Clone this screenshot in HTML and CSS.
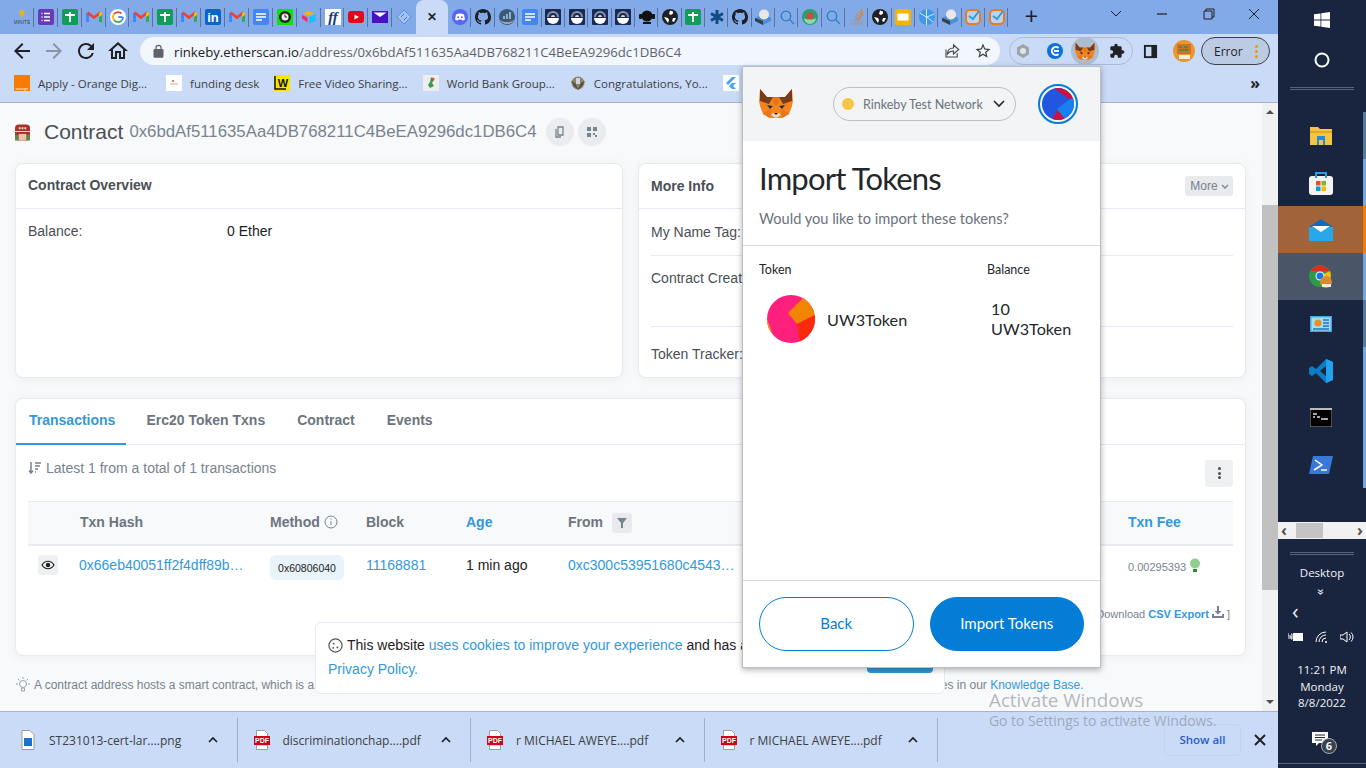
FILE: index.html
```html
<!DOCTYPE html>
<html lang="en">
<head>
  <meta charset="UTF-8">
  <title>Contract 0x6bdAf511635Aa4DB768211C4BeEA9296dc1DB6C4</title>
  <link rel="stylesheet" href="styles.css">
</head>
<body>

<svg class="defs" width="0" height="0">
  <symbol id="i-tasks" viewBox="0 0 16 16"><rect width="16" height="16" rx="2" fill="#673ab7"/><path d="M6 4.5h6M6 8h6M6 11.5h6M3.5 4.5h1M3.5 8h1M3.5 11.5h1" stroke="#fff" stroke-width="1.5"/></symbol>
  <symbol id="i-sheet" viewBox="0 0 16 16"><rect width="16" height="16" rx="2" fill="#0f9d58"/><path d="M3 6h10M8 3v10" stroke="#fff" stroke-width="1.8"/></symbol>
  <symbol id="i-gmail" viewBox="0 0 16 16"><path d="M1.5 13V4" stroke="#4285f4" stroke-width="3"/><path d="M14.5 13V4" stroke="#34a853" stroke-width="3"/><path d="M1.5 3.5L8 8.5l6.5-5" fill="none" stroke="#ea4335" stroke-width="2.6"/><path d="M13 4l2-1 1 1v2l-3 2z" fill="#fbbc04"/></symbol>
  <symbol id="i-google" viewBox="0 0 16 16"><circle cx="8" cy="8" r="8" fill="#fff"/><path d="M12.5 8H8.3" stroke="#4285f4" stroke-width="1.8"/><path d="M12 11.2A5 5 0 0 1 4 11" fill="none" stroke="#34a853" stroke-width="1.8"/><path d="M4 11a5 5 0 0 1 0-6" fill="none" stroke="#fbbc04" stroke-width="1.8"/><path d="M4 5a5 5 0 0 1 7.5-.5" fill="none" stroke="#ea4335" stroke-width="1.8"/><path d="M13 8a5 5 0 0 1-1 3.2" fill="none" stroke="#4285f4" stroke-width="1.8"/></symbol>
  <symbol id="i-docs" viewBox="0 0 16 16"><rect width="16" height="16" rx="2" fill="#4285f4"/><path d="M3 5h10M3 8h10M3 11h6" stroke="#fff" stroke-width="1.5"/></symbol>
  <symbol id="i-watch" viewBox="0 0 16 16"><rect width="16" height="16" fill="#0be30b"/><circle cx="8" cy="8" r="6" fill="#222"/><circle cx="8" cy="8" r="3.5" fill="#eee"/><path d="M8 5.5V8h2" stroke="#222" fill="none"/></symbol>
  <symbol id="i-air" viewBox="0 0 16 16"><path d="M7 2l6 2.2L7.5 6.5 2 4.2z" fill="#fcb400"/><path d="M8.5 8l6-2.400v6.400l-6 2.400z" fill="#18bfff"/><path d="M1 6l5.5 2.5v4.800L1 9.500z" fill="#f82b60"/></symbol>
  <symbol id="i-yt" viewBox="0 0 16 16"><rect y="2" width="16" height="12" rx="3" fill="#e50914"/><path d="M6.5 5.5v5L11 8z" fill="#fff"/></symbol>
  <symbol id="i-pmail" viewBox="0 0 16 16"><rect y="2" width="16" height="12" fill="#4a0fc4"/><path d="M1.5 3.5h13L8 8z" fill="#fff"/></symbol>
  <symbol id="i-diamond" viewBox="0 0 16 16"><path d="M8 1l7 7-7 7-7-7z" fill="#a3c2f0" stroke="#5c8fe0"/><path d="M5 8l3-3M8 11l3-3" stroke="#3f7be0"/></symbol>
  <symbol id="i-discord" viewBox="0 0 16 16"><circle cx="8" cy="8" r="8" fill="#5865f2"/><path d="M4 5.500c2.500-1.200 5.500-1.200 8 0l1 5c-1 .8-2 1-2.800 1L9.500 10.500h-3l-.7 1c-.8 0-1.800-.2-2.800-1z" fill="#fff"/><circle cx="6.2" cy="8.3" r="1" fill="#5865f2"/><circle cx="9.8" cy="8.3" r="1" fill="#5865f2"/></symbol>
  <symbol id="i-github" viewBox="0 0 16 16"><path fill="#1b1f23" d="M8 0C3.580 0 0 3.580 0 8c0 3.540 2.290 6.530 5.470 7.590.4.070.55-.17.55-.38 0-.19-.01-.82-.01-1.490-2.010.37-2.530-.49-2.690-.94-.09-.23-.48-.94-.82-1.130-.28-.15-.68-.52-.01-.53.63-.01 1.080.58 1.230.82.720 1.210 1.870.87 2.330.66.070-.52.280-.87.510-1.070-1.780-.2-3.640-.89-3.640-3.950 0-.87.310-1.590.82-2.150-.08-.2-.36-1.020.08-2.120 0 0 .67-.21 2.200.82.640-.18 1.320-.27 2-.27.680 0 1.360.09 2 .27 1.530-1.040 2.200-.82 2.200-.82.440 1.100.160 1.920.080 2.120.510.560.820 1.270.820 2.150 0 3.070-1.870 3.750-3.650 3.950.290.250.540.730.540 1.480 0 1.070-.01 1.930-.01 2.200 0 .21.150.46.550.38A8.013 8.013 0 0016 8c0-4.420-3.580-8-8-8z"/></symbol>
  <symbol id="i-chart" viewBox="0 0 16 16"><circle cx="8" cy="8" r="8" fill="#3a5878"/><path d="M1 11a8 8 0 0 0 14 0c-4 3-10 3-14 0z" fill="#aaa"/><path d="M4 10V7h2v3zM7 10V5h2v5zM10 10V3h2v7z" fill="#8fb0d0"/></symbol>
  <symbol id="i-arch" viewBox="0 0 16 16"><rect width="16" height="16" rx="1" fill="#1a2a55"/><path d="M2 8a6 6 0 0 1 12 0z" fill="#8a94ac"/><path d="M4 8a4 4 0 0 1 8 0z" fill="#1a2a55"/><path d="M6 8a2 2 0 0 1 4 0z" fill="#ddd"/><path d="M2 9h12a6 6 0 0 1-12 0z" fill="#fff"/></symbol>
  <symbol id="i-headset" viewBox="0 0 16 16"><circle cx="8" cy="7" r="5.5" fill="#111"/><rect x="0" y="5" width="3" height="5" rx="1" fill="#111"/><rect x="13" y="5" width="3" height="5" rx="1" fill="#111"/><path d="M4 14h8" stroke="#111" stroke-width="2"/></symbol>
  <symbol id="i-globe" viewBox="0 0 16 16"><circle cx="8" cy="8" r="8" fill="#202124"/><path d="M8 1.5l3 1v2L9 6 7 5zM2 8l4 1 1 2-1 3zM11 9h3l-2 4-2-1z" fill="#fff"/></symbol>
  <symbol id="i-star" viewBox="0 0 16 16"><path d="M8 1v14M2 4.5l12 7M14 4.5l-12 7" stroke="#0f4c81" stroke-width="3"/></symbol>
  <symbol id="i-ball" viewBox="0 0 16 16"><path d="M0 9l8-4 8 4v3l-8 4-8-4z" fill="#4a90d9"/><path d="M0 9l8 3v4l-8-4z" fill="#3a3f47"/><circle cx="9" cy="5.5" r="5" fill="#e8e8e8"/></symbol>
  <symbol id="i-search" viewBox="0 0 16 16"><circle cx="7" cy="7" r="4.8" fill="none" stroke="#2a7fc0" stroke-width="1.3"/><path d="M10.5 10.5L15 15" stroke="#2a7fc0" stroke-width="1.3"/></symbol>
  <symbol id="i-green" viewBox="0 0 16 16"><circle cx="8" cy="8" r="8" fill="#28a070"/><circle cx="8" cy="7" r="3.5" fill="#d04a40"/><path d="M2 9a6 6 0 0 0 12 0c-3 2-9 2-12 0z" fill="#8fd6a8"/></symbol>
  <symbol id="i-stack" viewBox="0 0 16 16"><path d="M3 10v5h10v-5M5 12.5h6" fill="none" stroke="#a89c90" stroke-width="1.3"/><path d="M5 10.5l6 .5M5.5 8l6 1.5M7 5l5.5 3M9.5 2l4 5M12 0l2 6" stroke="#e87a2a" stroke-width="1.2"/></symbol>
  <symbol id="i-yellow" viewBox="0 0 16 16"><rect width="16" height="16" rx="2" fill="#f4b400"/><rect x="2.5" y="4.5" width="11" height="7" fill="#fff"/></symbol>
  <symbol id="i-wheel" viewBox="0 0 16 16"><circle cx="8" cy="8" r="8" fill="#3e9ae8"/><path d="M7.5 0v16M1 4l6 4M15 5L8 8 14 13" stroke="#d6e6f8" fill="none"/></symbol>
  <symbol id="i-check" viewBox="0 0 16 16"><rect x="1" y="1" width="14" height="14" rx="4" fill="#b9d3f0" stroke="#ef7a1a" stroke-width="2"/><path d="M4 7l4 3 6-8" fill="none" stroke="#2a9ad8" stroke-width="1.8"/></symbol>
  <symbol id="i-fox" viewBox="0 0 34 32">
    <path d="M8 9h18l7-8 1 12-1 5-3 8-7 4H11l-7-4-3-8-1-5 1-12z" fill="#f5841f"/>
    <path d="M14 9h6l-1 8h-4z" fill="#e2761b"/><path d="M1 1l7 8 6 0-4 7-9-3zM33 1l-7 8-6 0 4 7 9-3z" fill="#763d16"/>
    <path d="M8 17l6 1-3 3zM26 17l-6 1 3 3z" fill="#233447"/>
    <path d="M12 27l5 3 5-3-2-2h-6z" fill="#e8ddd2"/><path d="M15 25h4l-2 2z" fill="#161616"/>
    <path d="M4 26l7-5 1 6-1 3zM30 26l-7-5-1 6 1 3z" fill="#e4761b"/>
  </symbol>
  <symbol id="i-back" viewBox="0 0 24 24"><path d="M20 11H7.830l5.590-5.590L12 4l-8 8 8 8 1.410-1.410L7.830 13H20v-2z"/></symbol>
  <symbol id="i-chevup" viewBox="0 0 12 12"><path d="M2 8l4-4 4 4" fill="none" stroke="#202124" stroke-width="1.7"/></symbol>
  <symbol id="i-pdf" viewBox="0 0 16 20"><path d="M2.5.5h8l3 3V7h-11z" fill="#fff" stroke="#888" stroke-width=".8"/><path d="M2.5 15h11v4.500h-11z" fill="#fff" stroke="#888" stroke-width=".8"/><rect x="0" y="6" width="16" height="9" fill="#d0021b"/></symbol>
</svg>

<div class="screen">
  <div class="browser">

    <div class="tabstrip">
      <div class="tab"><svg class="fav" viewBox="0 0 16 16"><path d="M8 0l3 3-2 5H7L5 3z" fill="#e0b030"/><text x="8" y="15" text-anchor="middle" font-size="5" font-family="Liberation Sans" fill="#444">MINITE</text></svg></div>
      <div class="tab"><svg class="fav"><use href="#i-tasks"/></svg></div>
      <div class="tab"><svg class="fav"><use href="#i-sheet"/></svg></div>
      <div class="tab"><svg class="fav"><use href="#i-gmail"/></svg></div>
      <div class="tab"><svg class="fav"><use href="#i-google"/></svg></div>
      <div class="tab"><svg class="fav"><use href="#i-gmail"/></svg></div>
      <div class="tab"><svg class="fav"><use href="#i-sheet"/></svg></div>
      <div class="tab"><svg class="fav"><use href="#i-gmail"/></svg></div>
      <div class="tab"><svg class="fav" viewBox="0 0 16 16"><rect width="16" height="16" rx="2" fill="#0a66c2"/><text x="8" y="13" text-anchor="middle" font-size="13" font-weight="700" font-family="Liberation Sans" fill="#fff">in</text></svg></div>
      <div class="tab"><svg class="fav"><use href="#i-gmail"/></svg></div>
      <div class="tab"><svg class="fav"><use href="#i-docs"/></svg></div>
      <div class="tab"><svg class="fav"><use href="#i-watch"/></svg></div>
      <div class="tab"><svg class="fav"><use href="#i-air"/></svg></div>
      <div class="tab"><svg class="fav" viewBox="0 0 16 16"><rect width="16" height="16" fill="#fff"/><text x="8" y="13" text-anchor="middle" font-size="15" font-style="italic" font-weight="700" font-family="Liberation Serif" fill="#123c78">ff</text></svg></div>
      <div class="tab"><svg class="fav"><use href="#i-yt"/></svg></div>
      <div class="tab"><svg class="fav"><use href="#i-pmail"/></svg></div>
      <div class="tab tab-last"><svg class="fav"><use href="#i-diamond"/></svg></div>
      <div class="tab-active">✕</div>
      <div class="tab tab-narrow"><svg class="fav"><use href="#i-discord"/></svg></div>
      <div class="tab tab-narrow"><svg class="fav"><use href="#i-github"/></svg></div>
      <div class="tab tab-narrow"><svg class="fav"><use href="#i-chart"/></svg></div>
      <div class="tab tab-narrow"><svg class="fav"><use href="#i-docs"/></svg></div>
      <div class="tab tab-narrow"><svg class="fav"><use href="#i-arch"/></svg></div>
      <div class="tab tab-narrow"><svg class="fav"><use href="#i-arch"/></svg></div>
      <div class="tab tab-narrow"><svg class="fav"><use href="#i-arch"/></svg></div>
      <div class="tab tab-narrow"><svg class="fav"><use href="#i-arch"/></svg></div>
      <div class="tab tab-narrow"><svg class="fav"><use href="#i-headset"/></svg></div>
      <div class="tab tab-narrow"><svg class="fav"><use href="#i-globe"/></svg></div>
      <div class="tab tab-narrow"><svg class="fav"><use href="#i-sheet"/></svg></div>
      <div class="tab tab-narrow"><svg class="fav"><use href="#i-star"/></svg></div>
      <div class="tab tab-narrow"><svg class="fav"><use href="#i-github"/></svg></div>
      <div class="tab tab-narrow"><svg class="fav"><use href="#i-ball"/></svg></div>
      <div class="tab tab-narrow"><svg class="fav"><use href="#i-search"/></svg></div>
      <div class="tab tab-narrow"><svg class="fav"><use href="#i-green"/></svg></div>
      <div class="tab tab-narrow"><svg class="fav"><use href="#i-search"/></svg></div>
      <div class="tab tab-narrow"><svg class="fav"><use href="#i-stack"/></svg></div>
      <div class="tab tab-narrow"><svg class="fav"><use href="#i-globe"/></svg></div>
      <div class="tab tab-narrow"><svg class="fav"><use href="#i-yellow"/></svg></div>
      <div class="tab tab-narrow"><svg class="fav"><use href="#i-wheel"/></svg></div>
      <div class="tab tab-narrow"><svg class="fav"><use href="#i-ball"/></svg></div>
      <div class="tab tab-narrow"><svg class="fav"><use href="#i-check"/></svg></div>
      <div class="tab tab-narrow"><svg class="fav"><use href="#i-check"/></svg></div>
      <div class="new-tab">+</div>
      <div class="win-btns">
        <svg width="46" height="28" viewBox="0 0 46 28"><path d="M18 11l5 5 5-5" fill="none" stroke="#202124"/></svg>
        <svg width="46" height="28" viewBox="0 0 46 28"><path d="M18 14h10" stroke="#202124" stroke-width="1.2"/></svg>
        <svg width="46" height="28" viewBox="0 0 46 28"><path d="M19 11h8v8h-8zM21 11V9h8v8h-2" fill="none" stroke="#202124"/></svg>
        <svg width="46" height="28" viewBox="0 0 46 28"><path d="M18 9l10 10M28 9L18 19" stroke="#202124"/></svg>
      </div>
    </div>

    <div class="toolbar">
      <svg class="tool" viewBox="0 0 24 24"><use href="#i-back"/></svg>
      <svg class="tool tool-off" viewBox="0 0 24 24"><g transform="matrix(-1 0 0 1 24 0)"><use href="#i-back"/></g></svg>
      <svg class="tool" viewBox="0 0 24 24"><path d="M17.650 6.350A7.958 7.958 0 0012 4c-4.420 0-7.990 3.580-7.990 8s3.570 8 7.990 8c3.730 0 6.840-2.550 7.730-6h-2.080A5.990 5.990 0 0112 18c-3.310 0-6-2.690-6-6s2.690-6 6-6c1.660 0 3.140.690 4.220 1.780L13 11h7V4l-2.350 2.350z"/></svg>
      <svg class="tool" viewBox="0 0 24 24"><path d="M12 5.690l5 4.500V18h-2v-6H9v6H7v-7.810l5-4.500M12 3L2 12h3v8h6v-6h2v6h6v-8h3L12 3z"/></svg>
      <div class="omnibox">
        <svg class="lock" viewBox="0 0 24 24"><path d="M18 8h-1V6A5 5 0 0 0 7 6v2H6a2 2 0 0 0-2 2v10c0 1.100.9 2 2 2h12a2 2 0 0 0 2-2V10a2 2 0 0 0-2-2zM9 6a3 3 0 0 1 6 0v2H9z"/></svg>
        <span class="url"><span class="url-host">rinkeby.etherscan.io</span>/address/0x6bdAf511635Aa4DB768211C4BeEA9296dc1DB6C4</span>
        <svg class="omni-icon" viewBox="0 0 24 24"><path d="M4 10v10h15v-5M14 4l7 6-7 6v-4c-4 0-6 1-8 4 0-5 3-8 8-8z" fill="none" stroke="#444" stroke-width="1.5"/></svg>
        <svg class="omni-icon omni-star" viewBox="0 0 24 24"><path d="M22 9.240l-7.190-.62L12 2 9.190 8.630 2 9.240l5.460 4.730L5.820 21 12 17.270 18.180 21l-1.630-7.030L22 9.240zM12 15.400l-3.760 2.270 1-4.280-3.320-2.880 4.380-.38L12 6.100l1.710 4.040 4.380.38-3.320 2.880 1 4.280L12 15.400z" fill="#3c4043"/></svg>
      </div>
      <div class="ext-pill">
        <svg class="ext" viewBox="0 0 16 16"><path d="M8 1l6 3.500v7L8 15l-6-3.500v-7z" fill="#a0a4a8"/><circle cx="8" cy="8" r="3" fill="#dde5f2"/></svg>
        <svg class="ext" viewBox="0 0 16 16"><circle cx="8" cy="8" r="8" fill="#0e70e0"/><path d="M11.5 5a4 4 0 1 0 0 6" fill="none" stroke="#fff" stroke-width="2"/><path d="M7 8h5" stroke="#fff" stroke-width="2"/></svg>
        <div class="ext-on"><svg class="ext-fox"><use href="#i-fox"/></svg></div>
        <svg class="ext" viewBox="0 0 24 24"><path fill="#202124" d="M20.500 11H19V7c0-1.100-.9-2-2-2h-4V3.500C13 2.120 11.880 1 10.500 1S8 2.120 8 3.500V5H4c-1.100 0-1.990.9-1.990 2v3.800H3.500c1.490 0 2.700 1.210 2.700 2.700s-1.210 2.700-2.700 2.700H2V20c0 1.100.9 2 2 2h3.800v-1.500c0-1.490 1.210-2.700 2.700-2.700 1.490 0 2.700 1.210 2.700 2.700V22H17c1.100 0 2-.9 2-2v-4h1.500c1.380 0 2.500-1.120 2.500-2.500S21.880 11 20.500 11z"/></svg>
      </div>
      <svg class="side-panel" viewBox="0 0 16 16"><path d="M1 1h14v14H1z" fill="#202124"/><rect x="3" y="3" width="6" height="10" fill="#c9dbf6"/></svg>
      <svg class="avatar" viewBox="0 0 22 22"><circle cx="11" cy="11" r="11" fill="#e8962e"/><rect x="4" y="4" width="14" height="10" fill="#c9742a"/><path d="M6 7h3M11 7h4M6 10h9" stroke="#3a8a50" stroke-width="1.5"/><rect x="6" y="15" width="11" height="4" fill="#f4f0e0"/></svg>
      <div class="error-pill"><span>Error</span><span class="dots"><i></i><i></i><i></i></span></div>
    </div>

    <div class="bookmarks">
      <div class="bm"><svg class="bm-ico" viewBox="0 0 16 16"><rect width="16" height="16" fill="#f57c00"/><text x="8" y="14.5" text-anchor="middle" font-size="4" font-family="Liberation Sans" fill="#fff">orange</text></svg>Apply - Orange Dig...</div>
      <div class="bm"><svg class="bm-ico" viewBox="0 0 16 16"><rect width="16" height="16" fill="#fff"/><path d="M4 9h8" stroke="#e0a090"/><circle cx="7" cy="6" r="1" fill="#d05040"/></svg>funding desk</div>
      <div class="bm"><svg class="bm-ico" viewBox="0 0 16 16"><rect width="16" height="16" fill="#f7e500"/><path d="M1 1v13h11" fill="none" stroke="#111" stroke-width="1.5"/><text x="9" y="12" text-anchor="middle" font-size="11" font-weight="700" font-family="Liberation Sans" fill="#111">W</text></svg>Free Video Sharing...</div>
      <div class="bm"><svg class="bm-ico" viewBox="0 0 16 16"><rect width="16" height="16" fill="#eee"/><path d="M8 2l3 3-2 3 2 3-4 2-2-3 2-3z" fill="#3a9a50"/><circle cx="10" cy="4" r="1.5" fill="#d05040"/></svg>World Bank Group...</div>
      <div class="bm"><svg class="bm-ico" viewBox="0 0 16 16"><circle cx="8" cy="8" r="6.5" fill="#8a8468"/><path d="M1 6l4 2 3 6 3-6 4-2-3 5-4 4-4-4z" fill="#5a4a3a"/><path d="M6 3h4v6H6z" fill="#cfd5dc"/></svg>Congratulations, Yo...</div>
      <div class="bm"><svg class="bm-ico" viewBox="0 0 16 16"><rect width="16" height="16" fill="#fff"/><path d="M9 2L3 8l2 2 8-8zM9 8l-3 3 3 3h4l-3-3 3-3z" fill="#42a5f5"/></svg></div>
      <div class="bm-more">»</div>
    </div>

    <div class="content">
      <div class="page">
        <div class="contract-head">
          <svg class="contract-ico" viewBox="0 0 16 17"><rect width="16" height="17" rx="4" fill="#a8322a"/><rect y="11" width="4" height="6" fill="#5a8a4a"/><rect x="12" y="11" width="4" height="6" fill="#5a8a4a"/><rect x="4" y="10" width="8" height="7" fill="#eec0a8"/><path d="M4 3h2v2H4zM7 3h2v2H7zM10 3h2v2h-2zM0 7h16v1H0z" fill="#f0d8c8"/></svg>
          <span class="contract-title">Contract</span>
          <span class="contract-addr">0x6bdAf511635Aa4DB768211C4BeEA9296dc1DB6C4</span>
          <span class="round-btn"><svg viewBox="0 0 12 12" width="12" height="12"><path d="M4 1h5v8H4zM2 3v8h5" fill="none" stroke="#77838f" stroke-width="1.3"/></svg></span>
          <span class="round-btn"><svg viewBox="0 0 12 12" width="12" height="12"><path d="M1 1h4v4H1zM7 1h4v4H7zM1 7h4v4H1zM7 7h2v2H7zM9 9h2v2H9z" fill="#77838f"/></svg></span>
        </div>

        <div class="overview">
          <section class="card">
            <div class="card-head">Contract Overview</div>
            <div class="row"><span class="row-label">Balance:</span><span>0 Ether</span></div>
          </section>
          <section class="card">
            <div class="card-head card-head-split">More Info <span class="more-btn">More <svg width="8" height="5" viewBox="0 0 8 5"><path d="M1 1l3 3 3-3" fill="none" stroke="#77838f" stroke-width="1.3"/></svg></span></div>
            <div class="info-row info-tag">My Name Tag:</div>
            <div class="info-row info-creator">Contract Creator:</div>
            <div class="info-row info-tracker">Token Tracker:</div>
          </section>
        </div>

        <section class="card tx-card">
          <div class="tabs">
            <span class="tx-tab tx-tab-on">Transactions</span>
            <span class="tx-tab">Erc20 Token Txns</span>
            <span class="tx-tab">Contract</span>
            <span class="tx-tab">Events</span>
          </div>
          <div class="tx-summary">
            <span class="latest"><svg width="14" height="14" viewBox="0 0 14 14"><path d="M3 1v11M1 9.5L3 12l2-2.5M7 2h6M7 5h5M7 8h3M7 11h1" fill="none" stroke="#77838f" stroke-width="1.5"/></svg>Latest 1 from a total of 1 transactions</span>
            <span class="kebab"><i></i><i></i><i></i></span>
          </div>
          <table class="tx-table">
            <colgroup><col class="c1"><col class="c2"><col class="c3"><col class="c4"><col class="c5"><col class="c6"><col class="c7"></colgroup>
            <thead>
              <tr>
                <th></th>
                <th>Txn Hash</th>
                <th>Method <svg width="14" height="14" viewBox="0 0 14 14" class="info-i"><circle cx="7" cy="7" r="6" fill="none" stroke="#77838f"/><path d="M7 6v4M7 3.5v1.2" stroke="#77838f"/></svg></th>
                <th>Block</th>
                <th class="link">Age</th>
                <th>From <span class="filter"><svg width="10" height="10" viewBox="0 0 10 10"><path d="M0 0h10L6 5v5H4V5z" fill="#77838f"/></svg></span></th>
                <th class="link">Txn Fee</th>
              </tr>
            </thead>
            <tbody>
              <tr>
                <td><span class="eye"><svg width="14" height="10" viewBox="0 0 14 10"><path d="M1 5c3-5 9-5 12 0-3 5-9 5-12 0z" fill="none" stroke="#1e2022" stroke-width="1.2"/><circle cx="7" cy="5" r="2.2" fill="#1e2022"/></svg></span></td>
                <td class="link">0x66eb40051ff2f4dff89b…</td>
                <td><span class="badge">0x60806040</span></td>
                <td class="link">11168881</td>
                <td class="dark">1 min ago</td>
                <td class="link">0xc300c53951680c4543…</td>
                <td class="fee">0.00295393 <svg width="12" height="15" viewBox="0 0 12 15"><circle cx="6" cy="5.5" r="5" fill="#8fd08f"/><rect x="4" y="11" width="4" height="3" fill="#2a8a2a"/></svg></td>
              </tr>
            </tbody>
          </table>
          <div class="csv">Download <b>CSV Export</b> <svg width="12" height="12" viewBox="0 0 12 12"><path d="M5 0h2v5h2.5L6 8.5 2.500 5H5zM0 8h2v2h8V8h2v4H0z" fill="#77838f"/></svg> ]</div>
        </section>

        <p class="note"><svg width="16" height="16" viewBox="0 0 16 16"><circle cx="8" cy="7" r="3.5" fill="none" stroke="#9aa3ad"/><path d="M6.5 11h3v3h-3zM8 0v2M1 7h2M13 7h2M3 2l1.500 1.500M13 2l-1.500 1.500" fill="none" stroke="#9aa3ad"/></svg><span>A contract address hosts a smart contract, which is a set of code stored on the blockchain that runs when predetermined conditions are met.</span><span class="note-end">Learn more about addresses in our <span class="link">Knowledge Base.</span></span></p>
      </div>
      <div class="scrollbar">
        <span class="sb-up"></span>
        <span class="sb-thumb"></span>
        <span class="sb-down"></span>
      </div>
    </div>

    <div class="downloads">
      <div class="dl"><svg class="dl-ico" width="16" height="20" viewBox="0 0 16 20"><path d="M2 .5h8l4 4v15H2z" fill="#fff" stroke="#888" stroke-width=".8"/><rect x="4" y="8" width="8" height="8" fill="#1a6fd0"/></svg><span class="dl-name">ST231013-cert-lar....png</span><svg class="dl-up"><use href="#i-chevup"/></svg></div>
      <div class="dl"><svg class="dl-ico" width="16" height="20" viewBox="0 0 16 20"><use href="#i-pdf"/><text x="8" y="13.2" text-anchor="middle" font-size="7" font-weight="700" font-family="Liberation Sans" fill="#fff">PDF</text></svg><span class="dl-name">discriminationchap....pdf</span><svg class="dl-up"><use href="#i-chevup"/></svg></div>
      <div class="dl"><svg class="dl-ico" width="16" height="20" viewBox="0 0 16 20"><use href="#i-pdf"/><text x="8" y="13.2" text-anchor="middle" font-size="7" font-weight="700" font-family="Liberation Sans" fill="#fff">PDF</text></svg><span class="dl-name">r MICHAEL AWEYE....pdf</span><svg class="dl-up"><use href="#i-chevup"/></svg></div>
      <div class="dl"><svg class="dl-ico" width="16" height="20" viewBox="0 0 16 20"><use href="#i-pdf"/><text x="8" y="13.2" text-anchor="middle" font-size="7" font-weight="700" font-family="Liberation Sans" fill="#fff">PDF</text></svg><span class="dl-name">r MICHAEL AWEYE....pdf</span><svg class="dl-up"><use href="#i-chevup"/></svg></div>
      <div class="dl-end">
        <span class="show-all">Show all</span>
        <svg width="12" height="12" viewBox="0 0 12 12"><path d="M1 1l10 10M11 1L1 11" stroke="#202124" stroke-width="2"/></svg>
      </div>
    </div>

    <!-- cookie bar and wallet popup lie over the page -->
    <div class="cookie">
      <div class="cookie-text"><svg width="15" height="15" viewBox="0 0 16 16"><circle cx="8" cy="8" r="7" fill="none" stroke="#555" stroke-width="1.3"/><circle cx="6" cy="6" r="1" fill="#555"/><circle cx="10" cy="10" r="1" fill="#555"/><circle cx="5.5" cy="10.5" r="1" fill="#555"/></svg>This website <span class="link">uses cookies to improve your experience</span> and has an updated</div>
      <div class="link">Privacy Policy.</div>
      <span class="cookie-btn"></span>
    </div>

    <div class="mm">
      <div class="mm-head">
        <svg class="mm-fox"><use href="#i-fox"/></svg>
        <div class="mm-net"><i class="net-dot"></i><span>Rinkeby Test Network</span><svg width="12" height="8" viewBox="0 0 12 8"><path d="M1 1l5 5 5-5" fill="none" stroke="#24272a" stroke-width="1.6"/></svg></div>
        <div class="mm-account">
          <svg width="32" height="32" viewBox="0 0 32 32"><defs><clipPath id="acct"><circle cx="16" cy="16" r="16"/></clipPath></defs><g clip-path="url(#acct)"><rect width="32" height="32" fill="#2356e0"/><path d="M13 1l14 10 6-2V0H13z" fill="#c9143f"/><path d="M15 21L28 11h5v21h-9z" fill="#1a80f0"/><path d="M15 22l9 10H10z" fill="#c9143f"/></g></svg>
        </div>
      </div>
      <div class="mm-title">
        <h1>Import Tokens</h1>
        <p>Would you like to import these tokens?</p>
      </div>
      <div class="mm-body">
        <div class="mm-cols"><span>Token</span><span>Balance</span></div>
        <div class="mm-token">
          <div class="mm-token-name">
            <svg width="48" height="48" viewBox="0 0 48 48"><defs><clipPath id="tok"><circle cx="24" cy="24" r="24"/></clipPath></defs><g clip-path="url(#tok)"><rect width="48" height="48" fill="#ff1f7d"/><path d="M0 24l8 22-8 2z" fill="#f0a000"/><path d="M21 18L36 3l12 1v16l-18 9z" fill="#f28500"/><path d="M30 29l18-9v28H33z" fill="#fa2a0a"/></g></svg>
            UW3Token
          </div>
          <div class="mm-balance">10<br>UW3Token</div>
        </div>
      </div>
      <div class="mm-foot">
        <span class="mm-btn mm-btn-back">Back</span>
        <span class="mm-btn mm-btn-main">Import Tokens</span>
      </div>
    </div>

    <div class="activate">
      <div class="activate-big">Activate Windows</div>
      <div class="activate-small">Go to Settings to activate Windows.</div>
    </div>
  </div>

  <aside class="taskbar">
    <div class="tb-top">
      <svg width="16" height="16" viewBox="0 0 16 16"><path d="M0 2.3l6.5-.9v6.200H0zM7.300 1.300L16 0v7.600H7.300zM0 8.400h6.500v6.200L0 13.700zM7.300 8.400H16V16l-8.700-1.200z" fill="#fff"/></svg>
    </div>
    <div class="tb-top"><svg width="16" height="16" viewBox="0 0 16 16"><circle cx="8" cy="8" r="6.5" fill="none" stroke="#fff" stroke-width="2"/></svg></div>
    <div class="grip"></div>
    <div class="tb-apps">
      <div class="tb-app tb-open"><svg width="22" height="18" viewBox="0 0 22 18"><path d="M0 0h8l2 2h12v16H0z" fill="#f4c542"/><path d="M0 4h22v2H0z" fill="#e0a820"/><path d="M7 9h8v9h-2v-5H9v5H7z" fill="#2b88d8"/></svg></div>
      <div class="tb-app"><svg width="24" height="24" viewBox="0 0 24 24"><rect y="5" width="24" height="19" rx="3" fill="#f4f4f4"/><path d="M7 7V2h10v5" fill="none" stroke="#29a0e0" stroke-width="2"/><rect x="7" y="10" width="4.5" height="4.5" fill="#e8502a"/><rect x="12.5" y="10" width="4.5" height="4.5" fill="#7cb82f"/><rect x="7" y="15.5" width="4.5" height="4.5" fill="#00a1e0"/><rect x="12.5" y="15.5" width="4.5" height="4.5" fill="#fcb900"/></svg></div>
      <div class="tb-app tb-mail"><svg width="24" height="22" viewBox="0 0 24 22"><path d="M0 8l12-8 12 8z" fill="#0f6cbd"/><path d="M0 8h24v14H0z" fill="#28a8ea"/><path d="M3 7h18l-9 6z" fill="#fff"/></svg></div>
      <div class="tb-app tb-chrome"><svg width="24" height="24" viewBox="0 0 24 24"><circle cx="11" cy="11" r="11" fill="#2c9a4a"/><path d="M1.5 6a11 11 0 0 1 19 0H11z" fill="#d93025"/><path d="M21 6a11 11 0 0 1-8 15l-2-10z" fill="#fbbc04"/><circle cx="11" cy="11" r="4.500" fill="#fff"/><circle cx="11" cy="11" r="3.5" fill="#1a73e8"/><circle cx="17" cy="17" r="6" fill="#d98a30"/><rect x="13" y="19" width="9" height="3" fill="#f4f0e0"/></svg></div>
      <div class="tb-app tb-open"><svg width="22" height="16" viewBox="0 0 22 16"><rect width="22" height="16" fill="#4aa8e0"/><rect x="1.5" y="1.5" width="19" height="13" fill="#a8daf4"/><circle cx="8" cy="7" r="3.5" fill="#e89020"/><path d="M13 4h6M13 7h6M13 10h6M3 13h16" stroke="#1a78c8" stroke-width="1.5"/></svg></div>
      <div class="tb-app"><svg width="24" height="24" viewBox="0 0 24 24"><path d="M17 0l7 3v18l-7 3L7 14l-4 3-3-2v-6l3-2 4 3z" fill="#0e7cc4"/><path d="M17 0l7 3v18l-7 3z" fill="#22a2ec"/><path d="M17 7l-6 5 6 5z" fill="#19253f"/></svg></div>
      <div class="tb-app"><svg width="22" height="19" viewBox="0 0 22 19"><rect width="22" height="19" fill="#000" stroke="#999"/><rect width="22" height="2" fill="#bbb"/><path d="M3 6h4M3 9h2M7 9h3M11 11h7" stroke="#ddd" stroke-width="1.3"/></svg></div>
      <div class="tb-app"><svg width="24" height="18" viewBox="0 0 24 18"><path d="M4 0h20l-4 18H0z" fill="#3a78d8"/><path d="M6 4l7 5-8 5M12 14h6" fill="none" stroke="#fff" stroke-width="1.5"/></svg></div>
    </div>
    <div class="tb-scroll"><span class="tb-arrow">‹</span><span class="tb-scroll-thumb"></span><span class="tb-arrow">›</span></div>
    <div class="grip grip-low"></div>
    <div class="tb-desktop">Desktop</div>
    <div class="tb-chevrons">»</div>
    <div class="tb-back">‹</div>
    <div class="tray">
      <svg width="16" height="12" viewBox="0 0 16 12"><path d="M0 2v3h3v2H0M3 3h1v5H3" stroke="#fff" fill="none"/><rect x="5" y="2" width="10" height="8" fill="#fff"/></svg>
      <svg width="14" height="12" viewBox="0 0 14 12"><path d="M1 11a10 10 0 0 1 10-10M4 11a7 7 0 0 1 7-7M7 11a4 4 0 0 1 4-4" fill="none" stroke="#fff"/><circle cx="11" cy="11" r="1" fill="#fff"/></svg>
      <svg width="16" height="12" viewBox="0 0 16 12"><path d="M0 4h3l4-3v10L3 8H0z" fill="none" stroke="#fff"/><path d="M9 3a4 4 0 0 1 0 6M11 1.5a6 6 0 0 1 0 9" fill="none" stroke="#fff"/></svg>
    </div>
    <div class="clock">11:21 PM<br>Monday<br>8/8/2022</div>
    <div class="notify">
      <svg width="16" height="14" viewBox="0 0 16 14"><path d="M0 0h16v11H7l-3 3v-3H0z" fill="#fff"/><path d="M3 3h10M3 5.5h10M3 8h7" stroke="#19253f"/></svg>
      <span class="notify-count">6</span>
    </div>
    <div class="tb-line"></div>
  </aside>
</div>

</body>
</html>
```

FILE: styles.css
```css
* {
  box-sizing: border-box;
}
html, body {
  margin: 0;
  height: 768px;
  overflow: hidden;
}
body {
  font-family: 'Liberation Sans', Arial, sans-serif;
  font-size: 14px;
  color: #4a4f55;
}
.defs {
  position: absolute;
}
.screen {
  display: flex;
  width: 1366px;
  height: 768px;
}
.browser {
  position: relative;
  width: 1278px;
  display: flex;
  flex-direction: column;
  overflow: hidden;
}
.link {
  color: #3498db;
}

/* tabs */
.tabstrip {
  height: 34px;
  background: #83aae8;
  display: flex;
  padding-left: 10px;
}
.tab {
  width: 23.9px;
  height: 34px;
  display: flex;
  align-items: center;
  justify-content: center;
  position: relative;
}
.tab::after {
  content: "";
  position: absolute;
  right: 0;
  top: 8px;
  height: 19px;
  width: 1px;
  background: #5d7398;
}
.tab-last::after {
  display: none;
}
.tab-narrow {
  width: 23.35px;
}
.fav {
  width: 16px;
  height: 16px;
}
.tab-active {
  width: 32px;
  height: 34px;
  background: #c9dbf6;
  border-radius: 8px 8px 0 0;
  display: flex;
  align-items: center;
  justify-content: center;
  font-size: 12px;
  font-weight: 700;
  color: #202124;
}
.new-tab {
  width: 46px;
  text-align: center;
  font-family: 'Open Sans', sans-serif;
  font-size: 24px;
  line-height: 32px;
  color: #202124;
}
.win-btns {
  margin-left: 39px;
  display: flex;
}
.win-btns svg {
  display: block;
}

/* toolbar */
.toolbar {
  height: 34px;
  background: #c9dbf6;
  display: flex;
  align-items: center;
  padding-left: 10px;
}
.tool {
  width: 24px;
  height: 24px;
  margin-right: 8px;
  fill: #202124;
}
.tool-off {
  fill: #8a94a6;
}
.omnibox {
  margin-left: 2px;
  width: 860px;
  height: 28px;
  background: #f2f6fd;
  border-radius: 14px;
  display: flex;
  align-items: center;
  padding-left: 11px;
}
.lock {
  width: 15px;
  height: 15px;
  fill: #5f6368;
  margin-right: 8px;
}
.url {
  font-family: 'Open Sans', sans-serif;
  font-size: 13.2px;
  color: #5f6368;
  flex: 1;
  white-space: nowrap;
  padding-top: 1px;
}
.url-host {
  color: #202124;
}
.omni-icon {
  width: 18px;
  height: 18px;
  margin-right: 13px;
}
.omni-star {
  margin-right: 8px;
}
.ext-pill {
  width: 124px;
  height: 28px;
  margin-left: 9px;
  border: 1px solid #aebcd3;
  border-radius: 14px;
  display: flex;
  align-items: center;
  padding-left: 5px;
}
.ext {
  width: 16px;
  height: 16px;
}
.ext-pill .ext:first-child {
  margin-right: 16px;
}
.ext-on {
  width: 28px;
  height: 28px;
  margin: 0 10px 0 8px;
  border-radius: 50%;
  background: #aebcd0;
  display: flex;
  align-items: center;
  justify-content: center;
}
.ext-fox {
  width: 20px;
  height: 19px;
}
.side-panel {
  width: 15px;
  height: 15px;
  margin-left: 10px;
}
.avatar {
  width: 22px;
  height: 22px;
  margin-left: 15px;
}
.error-pill {
  width: 69px;
  height: 28px;
  margin-left: 6px;
  border: 1px solid #3c4043;
  border-radius: 14px;
  background: #bccbe4;
  display: flex;
  align-items: center;
  justify-content: space-between;
  padding: 0 11px 0 12px;
  font-family: 'Open Sans', sans-serif;
  font-size: 12px;
  color: #202124;
}
.dots {
  display: flex;
  flex-direction: column;
  gap: 2px;
}
.dots i {
  width: 3px;
  height: 3px;
  border-radius: 50%;
  background: #f29900;
}

/* bookmarks */
.bookmarks {
  height: 35px;
  background: #c9dbf6;
  border-bottom: 1px solid #a5b4cc;
  display: flex;
  align-items: center;
  padding: 0 0 4px 14px;
  font-family: 'Open Sans', sans-serif;
  font-size: 11.5px;
  color: #3c4043;
}
.bm {
  display: flex;
  align-items: center;
  white-space: nowrap;
  margin-right: 15px;
}
.bm:first-child {
  margin-right: 19px;
}
.bm-ico {
  width: 16px;
  height: 16px;
  margin-right: 8px;
}
.bm-more {
  margin-left: auto;
  margin-right: 18px;
  font-size: 16px;
  font-weight: 700;
  color: #202124;
}

/* etherscan page */
.content {
  flex: 1;
  display: flex;
  min-height: 0;
  background: #f8f9fa;
}
.page {
  width: 1262px;
  padding: 15px 16px 0 15px;
}
.contract-head {
  height: 28px;
  display: flex;
  align-items: center;
}
.contract-ico {
  width: 15px;
  height: 17px;
  margin-right: 14px;
}
.contract-title {
  font-size: 21px;
  color: #4a4f55;
  margin-right: 6px;
}
.contract-addr {
  font-size: 16.8px;
  color: #77838f;
  margin-right: 10px;
}
.round-btn {
  width: 28px;
  height: 28px;
  border-radius: 50%;
  background: #eaecef;
  margin-right: 4px;
  display: flex;
  align-items: center;
  justify-content: center;
}
.overview {
  display: grid;
  grid-template-columns: 608px 608px;
  gap: 15px;
  margin-top: 17px;
}
.card {
  background: #fff;
  border: 1px solid #e7eaf3;
  border-radius: 8px;
  height: 215px;
  box-shadow: 0 1px 8px rgba(189, 197, 209, .2);
}
.card-head {
  height: 45px;
  line-height: 43px;
  padding-left: 12px;
  border-bottom: 1px solid #e7eaf3;
  font-weight: 700;
  color: #4a4f55;
}
.card-head-split {
  display: flex;
  justify-content: space-between;
  align-items: center;
  padding-right: 12px;
}
.more-btn {
  background: #e8eaed;
  color: #77838f;
  font-size: 12px;
  font-weight: 400;
  line-height: 20px;
  padding: 0 4px 0 5px;
  border-radius: 3px;
}
.more-btn svg {
  vertical-align: 1px;
}
.row {
  display: flex;
  padding: 14px 12px 0;
  color: #1e2022;
  line-height: 16px;
}
.row-label {
  width: 199px;
  color: #4a4f55;
}
.info-row {
  margin: 0 12px;
  padding-top: 15px;
  color: #4a4f55;
  line-height: 16px;
}
.info-tag {
  height: 47px;
  border-bottom: 1px solid #e7eaf3;
}
.info-creator {
  height: 71px;
  padding-top: 14px;
  border-bottom: 1px solid #e7eaf3;
}
.info-tracker {
  padding-top: 19px;
}
.tx-card {
  margin-top: 20px;
  height: 258px;
  padding: 0 12px;
}
.tabs {
  display: flex;
  height: 46px;
  margin: 0 -12px;
  border-bottom: 1px solid #e7eaf3;
  padding-right: 12px;
}
.tx-tab {
  padding: 0 16px;
  line-height: 43px;
  font-weight: 700;
  color: #6c757e;
}
.tx-tab-on {
  padding: 0 11px 0 13px;
  margin-right: 4px;
  color: #3498db;
  border-bottom: 2px solid #3498db;
  height: 46px;
}
.tx-summary {
  height: 56px;
  display: flex;
  align-items: center;
  justify-content: space-between;
  color: #77838f;
}
.latest {
  display: flex;
  align-items: center;
  gap: 4px;
  margin-bottom: 10px;
}
.kebab {
  width: 28px;
  height: 27px;
  background: #eef0f2;
  border-radius: 3px;
  display: flex;
  flex-direction: column;
  align-items: center;
  justify-content: center;
  gap: 1.5px;
}
.kebab i {
  width: 3px;
  height: 3px;
  border-radius: 50%;
  background: #4a4f55;
}
.tx-table {
  width: 1205px;
  table-layout: fixed;
  border-collapse: collapse;
}
.c1 { width: 40px; }
.c2 { width: 190px; }
.c3 { width: 96px; }
.c4 { width: 100px; }
.c5 { width: 102px; }
.c6 { width: 560px; }
.c7 { width: 117px; }
.tx-table th {
  height: 43px;
  padding: 0 12px 2px;
  text-align: left;
  background: #f8f9fa;
  border-top: 1px solid #e7eaf3;
  border-bottom: 2px solid #e7eaf3;
  color: #6c757e;
  white-space: nowrap;
}
.tx-table th.link {
  color: #3498db;
}
.info-i {
  vertical-align: -2px;
}
.filter {
  display: inline-flex;
  width: 20px;
  height: 20px;
  margin: -4px 0 -4px 5px;
  background: #e8eaed;
  border-radius: 3px;
  align-items: center;
  justify-content: center;
  vertical-align: middle;
}
.tx-table td {
  height: 40px;
  padding: 0 12px;
  white-space: nowrap;
  overflow: hidden;
}
.tx-table td:first-child {
  padding: 0 0 0 10px;
}
.tx-table td:nth-child(2) {
  padding-left: 11px;
}
.eye {
  display: flex;
  width: 20px;
  height: 20px;
  background: #eef0f2;
  border-radius: 3px;
  align-items: center;
  justify-content: center;
}
.badge {
  display: inline-block;
  width: 74px;
  height: 25px;
  margin-top: 4px;
  line-height: 26px;
  text-align: center;
  background: #e8f3fa;
  border-radius: 6px;
  font-size: 10.5px;
  color: #1e2022;
}
.dark {
  color: #1e2022;
}
.fee {
  font-size: 11px;
  color: #77838f;
}
.fee svg {
  vertical-align: -2px;
}
.csv {
  margin-top: 21px;
  text-align: right;
  font-size: 11px;
  color: #77838f;
  padding-right: 3px;
}
.csv b {
  color: #3498db;
}
.note {
  margin: 21px 0 0;
  font-size: 12px;
  color: #77838f;
  white-space: nowrap;
  display: flex;
  align-items: center;
  gap: 3px;
}
.note-end {
  margin-left: 20px;
}
.scrollbar {
  width: 16px;
  background: #f1f1f1;
  display: flex;
  flex-direction: column;
  align-items: center;
}
.sb-up {
  margin-top: 7px;
  border: 4px solid transparent;
  border-top: 0;
  border-bottom: 4px solid #505050;
}
.sb-thumb {
  width: 16px;
  height: 385px;
  margin-top: 91px;
  background: #c1c1c1;
}
.sb-down {
  margin-top: auto;
  margin-bottom: 7px;
  border: 4px solid transparent;
  border-bottom: 0;
  border-top: 4px solid #505050;
}

/* downloads shelf */
.downloads {
  height: 57px;
  background: #c9dbf6;
  border-top: 1px solid #a5b4cc;
  display: flex;
  align-items: center;
  padding-left: 4px;
  font-family: 'Open Sans', sans-serif;
  font-size: 12px;
  color: #3c4043;
}
.dl {
  width: 233.5px;
  height: 44px;
  display: flex;
  align-items: center;
  border-right: 1px solid #9fb0c9;
  padding: 0 18px 0 16px;
}
.dl-ico {
  margin-right: 13px;
}
.dl-name {
  flex: 1;
  white-space: nowrap;
}
.dl-up {
  width: 12px;
  height: 12px;
}
.dl-end {
  margin-left: auto;
  margin-right: 12px;
  display: flex;
  align-items: center;
  gap: 13px;
}
.show-all {
  width: 77px;
  height: 32px;
  line-height: 30px;
  text-align: center;
  border: 1px solid #c2d4f0;
  border-radius: 4px;
  font-size: 11.5px;
  color: #2a5bc8;
  font-weight: 600;
}

/* cookie notice */
.cookie {
  position: absolute;
  left: 315px;
  top: 622px;
  width: 630px;
  height: 72px;
  background: #fff;
  border: 1px solid #e7eaf3;
  border-radius: 6px;
  padding: 10px 12px 0;
  line-height: 24px;
  color: #1e2022;
}
.cookie-text {
  white-space: nowrap;
  display: flex;
  gap: 4px;
  align-items: center;
}
.cookie-btn {
  position: absolute;
  left: 551px;
  top: 45px;
  width: 66px;
  height: 5px;
  background: #3498db;
  border-radius: 0 0 4px 4px;
}

/* wallet popup */
.mm {
  position: absolute;
  left: 742px;
  top: 66px;
  width: 359px;
  height: 602px;
  background: #fff;
  border: 1px solid #b9bec6;
  box-shadow: 0 2px 6px rgba(0, 0, 0, .3);
  display: flex;
  flex-direction: column;
  font-family: 'Lato', sans-serif;
  color: #24272a;
}
.mm-head {
  height: 74px;
  background: #f2f4f6;
  display: flex;
  align-items: center;
  padding: 0 22px 0 16px;
}
.mm-fox {
  width: 34px;
  height: 32px;
}
.mm-net {
  width: 183px;
  height: 34px;
  margin-left: 40px;
  border: 1px solid #bbc0c5;
  border-radius: 17px;
  display: flex;
  align-items: center;
  padding: 0 10px 0 8px;
  font-size: 12.5px;
  color: #6a737d;
}
.mm-net span {
  flex: 1;
  white-space: nowrap;
}
.net-dot {
  width: 12px;
  height: 12px;
  border-radius: 50%;
  background: #f8c547;
  margin-right: 9px;
}
.mm-account {
  width: 40px;
  height: 40px;
  margin-left: 22px;
  border: 2px solid #037dd6;
  border-radius: 50%;
  display: flex;
  align-items: center;
  justify-content: center;
}
.mm-title {
  height: 105px;
  padding: 16px 16px 0;
  border-bottom: 1px solid #d6d9dc;
}
.mm-title h1 {
  margin: 0;
  font-size: 31px;
  font-weight: 400;
  letter-spacing: -.8px;
  line-height: 42px;
}
.mm-title p {
  margin: 11px 0 0;
  font-size: 14.6px;
  line-height: 18px;
  color: #6a737d;
}
.mm-body {
  flex: 1;
  padding: 16px 16px 0;
}
.mm-cols {
  display: flex;
  font-size: 12.5px;
  line-height: 15px;
}
.mm-cols span:first-child {
  width: 228px;
}
.mm-token {
  display: flex;
  align-items: center;
  margin-top: 18px;
  font-size: 16.2px;
}
.mm-token-name {
  width: 232px;
  padding-left: 8px;
  display: flex;
  align-items: center;
  gap: 12px;
}
.mm-balance {
  line-height: 20px;
}
.mm-foot {
  height: 87px;
  border-top: 1px solid #d6d9dc;
  display: flex;
  gap: 16px;
  padding: 16px 16px 0;
}
.mm-btn {
  width: 154.5px;
  height: 54px;
  border-radius: 27px;
  display: flex;
  align-items: center;
  justify-content: center;
  padding-bottom: 3px;
  font-size: 15px;
  border: 1px solid #037dd6;
}
.mm-btn-back {
  color: #037dd6;
}
.mm-btn-main {
  background: #037dd6;
  color: #fff;
}

/* windows watermark */
.activate {
  position: absolute;
  left: 989px;
  top: 690px;
  pointer-events: none;
  font-family: 'Open Sans', sans-serif;
  color: rgba(120, 125, 135, .55);
  white-space: nowrap;
}
.activate-big {
  font-size: 18.8px;
  line-height: 21px;
}
.activate-small {
  font-size: 13.9px;
  line-height: 20px;
}

/* taskbar */
.taskbar {
  width: 88px;
  background: #19253f;
  display: flex;
  flex-direction: column;
  align-items: center;
  color: #f0f2f6;
  font-family: 'Open Sans', sans-serif;
  font-size: 11.5px;
}
.tb-top {
  height: 40px;
  padding-top: 12px;
  align-self: stretch;
  text-align: center;
}
.tb-top svg {
  display: block;
  margin: 0 auto;
}
.grip {
  width: 64px;
  height: 3px;
  margin-top: 7px;
  border-top: 1px solid #56617a;
  border-bottom: 1px solid #56617a;
}
.tb-apps {
  margin-top: 22px;
  align-self: stretch;
  display: flex;
  flex-direction: column;
}
.tb-app {
  height: 47px;
  display: flex;
  align-items: center;
  justify-content: center;
  padding-left: 1px;
  border-right: 3px solid #6ea8dc;
}
.tb-open {
  border-right-color: #57799e;
}
.tb-mail {
  background: #a0633a;
  border-right-color: #f57c00;
}
.tb-chrome {
  background: #4a5568;
}
.tb-scroll {
  margin-top: 34px;
  align-self: stretch;
  height: 17px;
  background: #f1f1f1;
  display: flex;
  align-items: center;
  padding: 0 3px;
  color: #505050;
  font-weight: 700;
  font-size: 16px;
}
.tb-arrow {
  line-height: 15px;
}
.tb-scroll-thumb {
  width: 27px;
  height: 15px;
  margin: 0 auto 0 9px;
  background: #c4c4c4;
}
.grip-low {
  margin-top: 13px;
}
.tb-desktop {
  margin-top: 9px;
  line-height: 18px;
}
.tb-chevrons {
  transform: rotate(90deg);
  line-height: 14px;
  margin-top: 3px;
  font-size: 13px;
}
.tb-back {
  align-self: flex-start;
  margin-left: 14px;
  font-size: 22px;
  line-height: 24px;
  margin-top: -1px;
}
.tray {
  display: flex;
  gap: 11px;
  margin-top: 7px;
  height: 16px;
  align-items: center;
}
.clock {
  margin-top: 17px;
  text-align: center;
  line-height: 16.5px;
}
.notify {
  position: relative;
  margin-top: 20px;
  margin-left: -4px;
  height: 18px;
}
.notify-count {
  position: absolute;
  left: 9px;
  top: 6px;
  width: 16px;
  height: 16px;
  border-radius: 50%;
  background: #39414f;
  border: 1px solid #aaa;
  font-size: 11px;
  font-weight: 700;
  line-height: 14px;
  text-align: center;
}
.tb-line {
  align-self: stretch;
  margin-top: auto;
  margin-bottom: 4px;
  height: 1px;
  background: #56617a;
}
```
